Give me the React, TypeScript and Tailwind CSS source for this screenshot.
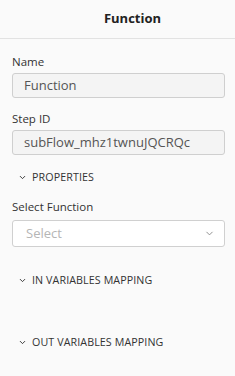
import { ChevronDown } from 'lucide-react'

function Section({ title, className }: { title: string; className?: string }) {
  return (
    <div className={`flex items-center gap-[5px] pl-[6px] h-4 ${className ?? ''}`}>
      <ChevronDown className="w-[9px] h-[9px] text-[#333]" strokeWidth={2.5} />
      <span className="text-[10.7px] text-[#333] tracking-[0.1px]">{title}</span>
    </div>
  )
}

function ReadonlyField({ label, value, className }: { label: string; value: string; className?: string }) {
  return (
    <div className={className}>
      <div className="text-[11.5px] leading-4 text-[#333]">{label}</div>
      <div className="mt-[3px] h-[25px] rounded-[3px] border border-[#cfcfcf] bg-[#f4f4f4] flex items-center px-[11px] text-[13px] text-[#555]">
        {value}
      </div>
    </div>
  )
}

export default function App() {
  return (
    <div className="w-[235px] h-[376px] bg-[#fafafa] font-['Open_Sans',sans-serif] overflow-hidden">
      <div className="h-[39px] border-b border-[#e2e2e2] flex items-center justify-center pl-[30px]">
        <span className="text-[13px] font-bold text-[#222]">Function</span>
      </div>
      <div className="pl-3 pr-[10px]">
        <ReadonlyField className="mt-[15px]" label="Name" value="Function" />
        <ReadonlyField className="mt-[13px]" label="Step ID" value="subFlow_mhz1twnuJQCRQc" />
        <Section className="mt-[14px]" title="PROPERTIES" />
        <div className="mt-[14px] text-[11.5px] leading-4 text-[#333]">Select Function</div>
        <div className="mt-[5px] h-[27px] rounded-[3px] border border-[#d0d0d0] bg-white flex items-center justify-between pl-[13px] pr-[9px]">
          <span className="text-[13px] text-[#b5b5b5]">Select</span>
          <ChevronDown className="w-[11px] h-[11px] text-[#888]" strokeWidth={2} />
        </div>
        <Section className="mt-[25px]" title="IN VARIABLES MAPPING" />
        <Section className="mt-[46px]" title="OUT VARIABLES MAPPING" />
      </div>
    </div>
  )
}
